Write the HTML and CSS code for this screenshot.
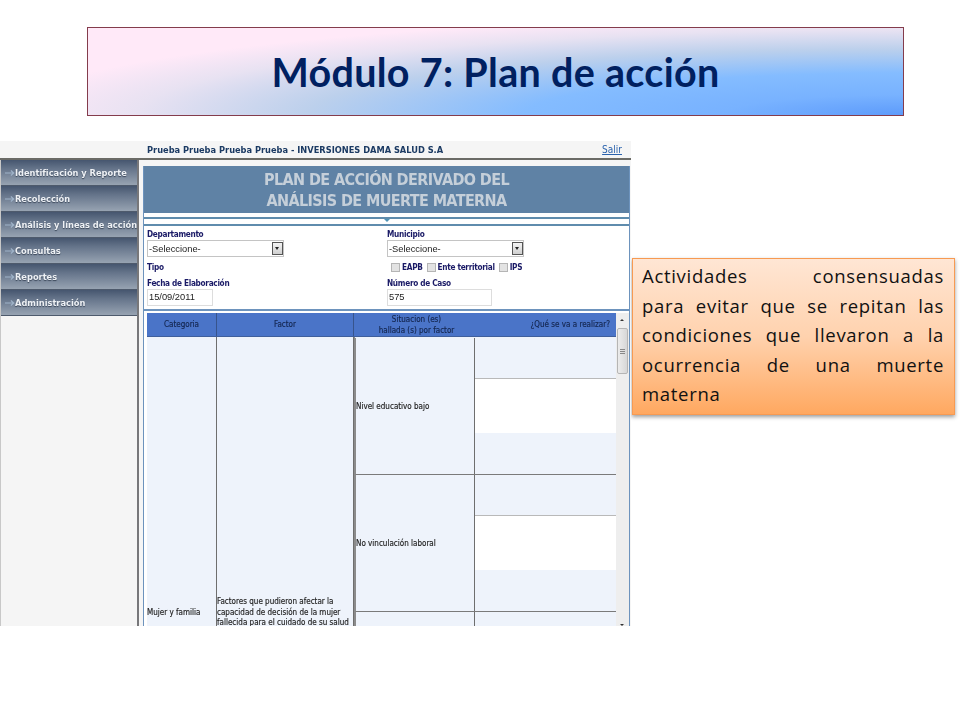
FILE: index.html
```html
<!DOCTYPE html>
<html lang="es">
<head>
<meta charset="utf-8">
<title>Módulo 7: Plan de acción</title>
<link rel="stylesheet" href="styles.css">
</head>
<body>
<main class="slide">
  <h1 class="title">Módulo 7: Plan de acción</h1>
  <div class="content">
    <section class="shot">
      <header class="topbar">
        <span class="org">Prueba Prueba Prueba Prueba - INVERSIONES DAMA SALUD S.A</span>
        <a class="logout" href="#">Salir</a>
      </header>
      <div class="shot-body">
        <nav class="menu">
          <div class="menu-item"><svg class="arrow" viewBox="0 0 12 8"><path d="M0 4h10M7 1l3.500 3-3.500 3" /></svg>Identificación y Reporte</div>
          <div class="menu-item"><svg class="arrow" viewBox="0 0 12 8"><path d="M0 4h10M7 1l3.500 3-3.500 3" /></svg>Recolección</div>
          <div class="menu-item"><svg class="arrow" viewBox="0 0 12 8"><path d="M0 4h10M7 1l3.500 3-3.500 3" /></svg>Análisis y líneas de acción</div>
          <div class="menu-item"><svg class="arrow" viewBox="0 0 12 8"><path d="M0 4h10M7 1l3.500 3-3.500 3" /></svg>Consultas</div>
          <div class="menu-item"><svg class="arrow" viewBox="0 0 12 8"><path d="M0 4h10M7 1l3.500 3-3.500 3" /></svg>Reportes</div>
          <div class="menu-item"><svg class="arrow" viewBox="0 0 12 8"><path d="M0 4h10M7 1l3.500 3-3.500 3" /></svg>Administración</div>
        </nav>
        <div class="panel">
          <div class="panel-head">PLAN DE ACCIÓN DERIVADO DEL<br>ANÁLISIS DE MUERTE MATERNA</div>
          <div class="strip"><span class="caret"></span></div>
          <div class="form">
            <div class="field">
              <div class="lbl">Departamento</div>
              <div class="select"><span>-Seleccione-</span><span class="select-btn"></span></div>
              <div class="lbl tipo">Tipo</div>
              <div class="lbl fecha">Fecha de Elaboración</div>
              <div class="input input-date">15/09/2011</div>
            </div>
            <div class="field">
              <div class="lbl">Municipio</div>
              <div class="select"><span>-Seleccione-</span><span class="select-btn"></span></div>
              <div class="checks">
                <span class="check"></span><span class="lbl">EAPB</span>
                <span class="check"></span><span class="lbl">Ente territorial</span>
                <span class="check"></span><span class="lbl">IPS</span>
              </div>
              <div class="lbl fecha">Número de Caso</div>
              <div class="input input-case">575</div>
            </div>
          </div>
          <div class="grid-wrap">
            <div class="plan">
              <div class="plan-head">
                <div class="th th-cat">Categoria</div>
                <div class="th th-fac">Factor</div>
                <div class="th th-sit"><span class="sit">Situacion (es)<br>hallada (s) por factor</span><span class="que">¿Qué se va a realizar?</span></div>
              </div>
              <div class="plan-row">
                <div class="td td-cat">Mujer y familia</div>
                <div class="td td-fac">Factores que pudieron afectar la capacidad de decisión de la mujer fallecida para el cuidado de su salud</div>
                <div class="td-sit">
                  <div class="sub"><div class="sub-name">Nivel educativo bajo</div><div class="sub-do"><div class="area"></div></div></div>
                  <div class="sub"><div class="sub-name">No vinculación laboral</div><div class="sub-do"><div class="area"></div></div></div>
                  <div class="sub"><div class="sub-name"></div><div class="sub-do"></div></div>
                </div>
              </div>
            </div>
            <div class="scroll">
              <span class="scroll-up"></span>
              <span class="thumb"></span>
              <span class="scroll-down"></span>
            </div>
          </div>
        </div>
      </div>
    </section>
    <aside class="note">Actividades consensuadas para&nbsp;evitar que se repitan las condiciones que llevaron a la ocurrencia de una muerte materna</aside>
  </div>
</main>
</body>
</html>
```
FILE: styles.css
```css
* { box-sizing: border-box; }
html, body { margin: 0; background: #fff; }
body { width: 960px; height: 720px; overflow: hidden; }
.slide { padding-top: 27px; }
.title {
  margin: 0 0 0 87px;
  width: 817px;
  height: 89px;
  border: 1px solid #843c4c;
  background: radial-gradient(ellipse 900px 100px at 100% 100%, #5d9bfb 0%, #78b2ff 20%, #84bcff 42%, #bcd0ec 66%, #e8e2f2 85%, #ffe9f8 100%);
  color: #002060;
  font: 700 39.500px/88px Lato, sans-serif;
  letter-spacing: 0.3px;
  text-align: center;
}
.content { display: flex; margin-top: 25px; align-items: flex-start; }
.shot {
  width: 631px;
  height: 485px;
  overflow: hidden;
  background: #f5f5f5;
  flex: none;
  font-family: "DejaVu Sans Condensed", "Open Sans", sans-serif;
  filter: blur(0.3px);
}
.topbar {
  height: 19px;
  border-bottom: 2px solid #6b6b66;
  padding: 0 9px 0 147px;
  display: flex;
  justify-content: space-between;
  align-items: center;
  font-size: 9.200px;
}
.org { font-weight: 700; color: #1b3a63; }
.logout { color: #2a62ad; text-decoration: underline; font-size: 10px; }
.shot-body { display: flex; }
.menu {
  width: 139px;
  height: 466px;
  border-right: 2px solid #77777a;
  border-left: 1px solid #c8c8c8;
  flex: none;
}
.menu-item {
  height: 26px;
  display: flex;
  align-items: center;
  background: linear-gradient(#46566f, #65748a 35%, #97a3b2);
  border-bottom: 1px solid #4e5a6c;
  color: #eef1f5;
  font-size: 9.200px;
  font-weight: 700;
  text-shadow: 0 1px 1px #3a4658;
  white-space: nowrap;
}
.arrow { width: 10px; height: 8px; margin: 0 0 0 4px; flex: none; fill: none; stroke: #9fb3c9; stroke-width: 1.300; }
.panel {
  margin: 6px 0 0 4px;
  width: 487px;
  height: 460px;
  background: #fff;
  border-left: 1px solid #6d93bd;
  border-right: 1px solid #6d93bd;
}
.panel-head {
  height: 47px;
  padding-top: 3px;
  background: #5f82a5;
  color: #c5cfd9;
  font-size: 16px;
  letter-spacing: -0.6px;
  line-height: 21px;
  font-weight: 700;
  text-align: center;
}
.strip {
  height: 9px;
  margin-top: 4px;
  border-top: 2px solid #5f8cad;
  border-bottom: 2px solid #5f8cad;
  display: flex;
  justify-content: center;
}
.caret {
  width: 0;
  height: 0;
  border-left: 3px solid transparent;
  border-right: 3px solid transparent;
  border-top: 3px solid #4f93b5;
}
.form {
  height: 85px;
  padding: 3px 0 0 3px;
  display: grid;
  grid-template-columns: 240px 1fr;
  border-bottom: 2px solid #6d93bd;
}
.lbl { font-size: 8.200px; letter-spacing: -0.3px; line-height: 11px; font-weight: 700; color: #1a1a66; }
.select {
  width: 137px;
  height: 17px;
  display: flex;
  justify-content: space-between;
  align-items: center;
  background: #fff;
  border: 1px solid #c4c4c4;
  font: 9.300px "Liberation Sans", sans-serif;
  color: #222;
  padding-left: 1px;
}
.select-btn {
  width: 11px;
  height: 13px;
  background: linear-gradient(#f4f4f4, #cfcfcf);
  border: 1px solid #555;
  position: relative;
}
.select-btn::after {
  content: "";
  position: absolute;
  left: 2px;
  top: 4px;
  border-left: 2.500px solid transparent;
  border-right: 2.500px solid transparent;
  border-top: 3px solid #222;
}
.tipo { margin-top: 5px; }
.fecha { margin-top: 5px; }
.input {
  height: 17px;
  border: 1px solid #ddd;
  background: #fff;
  font: 9.300px/15px "Liberation Sans", sans-serif;
  color: #222;
  padding-left: 1px;
}
.input-date { width: 66px; }
.input-case { width: 105px; }
.checks {
  display: flex;
  align-items: center;
  height: 12px;
  margin-top: 4px;
  padding-left: 4px;
}
.check {
  width: 9px;
  height: 9px;
  margin: 0 2px 0 0;
  border: 1px solid #b5b5b5;
  background: #e3e3e3;
}
.checks .lbl { margin-right: 4px; }
.grid-wrap { display: flex; padding-left: 3px; margin-top: 2px; }
.plan { width: 469px; flex: none; }
.plan-head { display: flex; height: 24px; background: #4a74c8; border-bottom: 1px solid #3f5f9c; }
.th {
  font-size: 8px;
  -webkit-text-stroke: 0.15px #14264f;
  color: #14264f;
  display: flex;
  align-items: center;
  justify-content: center;
  text-align: center;
  line-height: 11px;
  border-right: 1px solid #37548c;
}
.th-cat { width: 70px; }
.th-fac { width: 137px; }
.th-sit { flex: 1; justify-content: space-between; border-right: 0; padding-right: 6px; }
.sit { width: 125px; }
.plan-row { display: flex; height: 552px; background: #eef3fb; }
.td {
  display: flex;
  align-items: center;
  font-size: 8px;
  line-height: 10.500px;
  color: #222;
  -webkit-text-stroke: 0.15px #222;
  border-right: 1px solid #6e6e6e;
}
.td-cat { width: 70px; }
.td-fac { width: 137px; }
.td-sit { flex: 1; padding-top: 1px; border-left: 1px solid #8b8b8b; }
.sub { display: flex; height: 137px; border-bottom: 1px solid #7a7a7a; border-left: 1px solid #8b8b8b; }
.sub-name {
  width: 119px;
  display: flex;
  align-items: center;
  font-size: 8px;
  color: #222;
  -webkit-text-stroke: 0.15px #222;
  border-right: 1px solid #6e6e6e;
  flex: none;
}
.sub-do { flex: 1; padding-top: 40px; }
.area { height: 55px; background: #fff; border-top: 1px solid #b9b9b9; }
.scroll { width: 13px; flex: none; height: 315px; background: #eee; padding-top: 15px; position: relative; }
.scroll-up,
.scroll-down {
  position: absolute;
  left: 4px;
  border-left: 2px solid transparent;
  border-right: 2px solid transparent;
}
.scroll-up { top: 6px; border-bottom: 2px solid #333; }
.scroll-down { top: 311px; border-top: 2px solid #333; }
.thumb {
  display: flex;
  align-items: center;
  justify-content: center;
  width: 11px;
  height: 46px;
  margin-left: 1px;
  background: linear-gradient(90deg, #ececec, #d7d7d7);
  border: 1px solid #b5b5b5;
  border-radius: 2px;
}
.thumb::after {
  content: "";
  width: 5px;
  height: 5px;
  background: repeating-linear-gradient(#888 0 1px, transparent 1px 2px);
}
.note {
  width: 323px;
  height: 157px;
  margin: 117px 0 0 1px;
  flex: none;
  padding: 2px 10px 0 9px;
  border: 1px solid #f79a52;
  background: linear-gradient(#ffe6d4, #ffd2ae 50%, #ffa860);
  box-shadow: 0 2px 4px rgba(0, 0, 0, .4);
  font: 18.500px/29.600px "Open Sans", sans-serif;
  letter-spacing: 0.7px;
  color: #111;
  text-align: justify;
}
```
